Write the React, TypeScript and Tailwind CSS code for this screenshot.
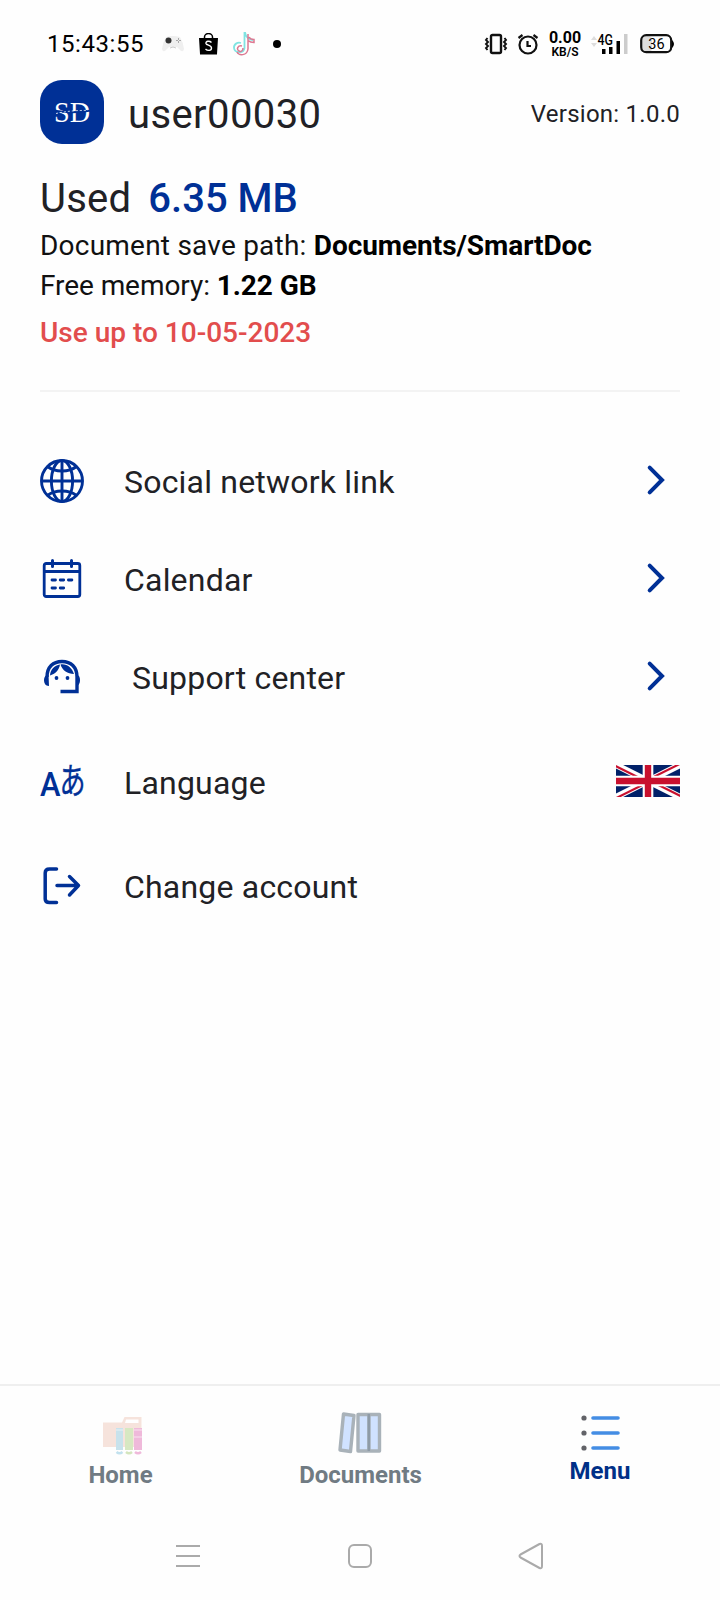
import type { ReactNode } from "react";

const GlobeIcon = () => (
  <svg className="mb-px" width="44" height="44" viewBox="0 0 44 44" fill="none" stroke="#003096" strokeWidth="2.900">
    <circle cx="22" cy="22" r="20.500" />
    <ellipse cx="22" cy="22" rx="10.600" ry="20.500" />
    <path d="M22 1v42M1 22h42" />
    <path d="M7.500 7.500c7.500 6 21.500 6 29 0M7.500 36.500c7.500-6 21.500-6 29 0" />
  </svg>
);

const CalendarIcon = () => (
  <svg width="44" height="44" viewBox="0 0 44 44" fill="none" stroke="#003096" strokeWidth="2.800">
    <rect x="4.200" y="6.500" width="35.600" height="33" rx="2" />
    <path d="M4 14.500h36" strokeWidth="3" />
    <path d="M12.500 3.500v6M31.500 3.500v6" strokeWidth="3" strokeLinecap="round" />
    <path d="M12 23h3.500M20.200 23h3.500M28.400 23h3.500M12 31h3.500M20.200 31h3.500" strokeWidth="2.800" strokeLinecap="round" />
  </svg>
);

const SupportIcon = () => (
  <svg width="44" height="44" viewBox="0 0 44 44" fill="none">
    <path d="M7 22C7 12 13 6.500 22 6.500S37 12 37 22v14.500H20.500" stroke="#003096" strokeWidth="3.400" />
    <path d="M8.500 19.500c-3 .5-4.500 2.500-4.500 5.500s1.500 6 5 6zM36 19.500c3 .5 4 2.500 4 5.500s-1 5.500-4 6z" fill="#003096" />
    <path d="M20 9.500c-5.500.8-9.500 5-10 11 5-1.500 9-5 10-11zM20.500 9.500c2 6 7 9.500 13.500 9.500C32 13 27 8.500 20.500 9.500z" fill="#003096" />
    <circle cx="16.500" cy="23" r="1.900" fill="#003096" />
    <circle cx="27.500" cy="23" r="1.900" fill="#003096" />
  </svg>
);

const LanguageIcon = () => (
  <svg className="overflow-visible" width="44" height="48" viewBox="0 0 44 48" fill="#003096">
    <text x="0" y="38" fontSize="34" fontWeight="500" textLength="20.500" lengthAdjust="spacingAndGlyphs" className="font-['Roboto',sans-serif]">A</text>
    <text x="19.500" y="36" fontSize="36" fontWeight="400" stroke="#003096" strokeWidth=".4" textLength="26" lengthAdjust="spacingAndGlyphs" className="font-['Noto_Sans_CJK_JP',sans-serif]">あ</text>
  </svg>
);

const LogoutIcon = () => (
  <svg width="44" height="44" viewBox="0 0 44 44" fill="none" stroke="#003096" strokeWidth="3.500" strokeLinecap="round" strokeLinejoin="round">
    <path d="M16.500 5H9.500Q5.200 5 5.200 9v26q0 3.500 4.300 3.500h7" />
    <path d="M17 21.500h21.500M29.500 12.500l9 9-9 9.500" />
  </svg>
);

const Chevron = () => (
  <svg className="mb-0.5" width="48" height="44" viewBox="0 0 48 44" fill="none" stroke="#003096" strokeWidth="4" strokeLinecap="round">
    <path d="M17.700 9.700L30 22 17.700 34.300" />
  </svg>
);

const Flag = () => (
  <svg className="mb-0.5" width="64" height="32" viewBox="0 0 60 30">
    <clipPath id="saltire">
      <path d="M30 15h30v15zv15H0zH0V0zV0h30z" />
    </clipPath>
    <path d="M0 0h60v30H0z" fill="#012169" />
    <path d="M0 0l60 30M60 0L0 30" stroke="#fff" strokeWidth="6" />
    <path d="M0 0l60 30M60 0L0 30" clipPath="url(#saltire)" stroke="#c8102e" strokeWidth="4" />
    <path d="M30 0v30M0 15h60" stroke="#fff" strokeWidth="10" />
    <path d="M30 0v30M0 15h60" stroke="#c8102e" strokeWidth="6" />
  </svg>
);

const menuItems: { label: string; icon: ReactNode; action?: ReactNode; height: string; indent: string }[] = [
  { label: "Social network link", icon: <GlobeIcon />, action: <Chevron />, height: "h-[98px]", indent: "pl-10" },
  { label: "Calendar", icon: <CalendarIcon />, action: <Chevron />, height: "h-[98px]", indent: "pl-10" },
  { label: "Support center", icon: <SupportIcon />, action: <Chevron />, height: "h-[98px]", indent: "pl-12" },
  { label: "Language", icon: <LanguageIcon />, action: <Flag />, height: "h-[112px]", indent: "pl-10" },
  { label: "Change account", icon: <LogoutIcon />, height: "h-[96px]", indent: "pl-10" },
];

const HomeIcon = () => (
  <svg className="ml-1.5" width="40" height="40" viewBox="0 0 40 40" fill="none">
    <path d="M0 6.500h19l2.500-5.500h17V31H0z" fill="#f6e3dc" />
    <path d="M23 3.500h12.500v3.500H22z" fill="#fff" />
    <path d="M13 12h7v22h-7z" fill="#c8e2ec" />
    <path d="M22 12h8v22h-8z" fill="#d7e8c2" />
    <path d="M31 12h8v22h-8z" fill="#efb9da" />
    <path d="M13 14h7M31 14h8M31 21h8" stroke="#fff" strokeOpacity=".4" strokeWidth="1.500" />
    <path d="M13.500 36q3 2.500 6 0" stroke="#c2e1ee" strokeWidth="2.500" />
    <path d="M23 36q3 2.500 6 0" stroke="#d3e5bd" strokeWidth="2.500" />
    <path d="M32 36q3 2.500 6 0" stroke="#efb9da" strokeWidth="2.500" />
  </svg>
);

const DocumentsIcon = () => (
  <svg width="44" height="42" viewBox="0 0 44 42" fill="#d0e2ff" stroke="#a9b2b9" strokeWidth="3.400" strokeLinejoin="round">
    <path d="M5.500 2L16 3.500 12.500 39.500 2 38z" />
    <path d="M20 2.500h11V39H20zM31 2.500h10.500V39H31z" />
    <path d="M30.800 2v37" stroke="#8e9ba7" strokeWidth="2.500" />
  </svg>
);

const ListIcon = () => (
  <svg className="ml-0.5" width="40" height="38" viewBox="0 0 40 38">
    <g fill="#626368">
      <circle cx="3" cy="4" r="2.600" />
      <circle cx="3" cy="19" r="2.600" />
      <circle cx="3" cy="34" r="2.600" />
    </g>
    <path d="M12 4h25M12 19h25M12 34h25" stroke="#448de4" strokeWidth="3.600" strokeLinecap="round" />
  </svg>
);

function StatusBar() {
  return (
    <header className="flex h-20 items-center pt-2 pl-[47px] text-black">
      <span className="w-[115px] text-[24px] leading-6 tracking-[0.550px]">15:43:55</span>
      <svg width="22" height="20" viewBox="0 0 22 20">
        <path d="M4 3Q11 1 18 3q3 5 4 12-1 4-4 1l-3-3H7l-3 3q-3 3-4-1Q1 8 4 3z" fill="#efefef" />
        <circle cx="6.500" cy="6.500" r="3" fill="#333" />
        <path d="M14 6.500h5M16.500 4v5" stroke="#aaa" strokeDasharray="2 1" />
        <path d="M8 14q3-2 6 0" stroke="#ccc" fill="none" />
      </svg>
      <svg className="ml-3.5" width="22" height="22" viewBox="0 0 22 22">
        <path d="M1 5h19l-1 16.500H2z" fill="#000" />
        <path d="M6.500 6V4a4 3.500 0 0 1 8 0V6" fill="none" stroke="#000" strokeWidth="1.500" />
        <path d="M13.500 9.500c-2-2-6-1.500-5.500 1 .5 2 5.500 1.500 5.500 4.500 0 3-4 3-6 1" fill="none" stroke="#fff" strokeWidth="1.400" />
      </svg>
      <svg className="mb-0.5 ml-3" width="24" height="25" viewBox="0 0 24 25" fill="none" strokeWidth="1.800">
        <path d="M12.500 1v16c-1 6-10 5-10.500 0-.3-4 3.500-6 7-5M13 1c.5 5 4 8 8 8" stroke="#80e4e2" />
        <path d="M16 3v15c-1 7-9 7-11 3M17 6c1 2 3 2.500 5 2.500v3c-2.500 0-4.500-.7-6-2M10 15c-4-1-6 3-3 5 2 1 4 0 4-3" stroke="#dc7891" strokeWidth="1.500" />
      </svg>
      <span className="ml-[17px] size-2 rounded-full bg-black" />

      <div className="ml-auto flex items-center pr-[45px]">
        <svg width="24" height="22" viewBox="0 0 24 22" fill="none" stroke="#111" strokeWidth="2.400">
          <rect x="7" y="2" width="10" height="18" rx="1.500" />
          <path d="M3.500 5L2 7l2 2-2 2 2 2-2 2 1.500 2M20.500 5L22 7l-2 2 2 2-2 2 2 2-1.500 2" strokeWidth="1.900" />
        </svg>
        <svg className="ml-[9px]" width="22" height="22" viewBox="0 0 22 22" fill="none" stroke="#111" strokeWidth="2.200">
          <circle cx="11" cy="12" r="8.500" />
          <path d="M10.500 8v5H14M1.500 5l4-3M20.500 5l-4-3" />
        </svg>
        <div className="ml-2.5 flex w-[32px] flex-col items-center whitespace-nowrap">
          <span className="text-[16px] leading-[14px] font-bold">0.00</span>
          <span className="pt-px text-[12px] leading-[12px] font-semibold">KB/S</span>
        </div>
        <svg className="ml-[9px]" width="38" height="24" viewBox="0 0 38 24">
          <path d="M1 8l3-4 3 4zM1 11l3 4 3-4z" fill="#ddd" />
          <text x="7.500" y="12.500" fontSize="14" fontWeight="500" textLength="15.500" lengthAdjust="spacingAndGlyphs">4G</text>
          <path d="M12 17h3.500v5H12zM19 15h3.500v7H19zM26.500 9h3.500v13h-3.500z" />
          <path d="M34 2h3.500v20H34z" fill="#ccc" />
        </svg>
        <svg className="ml-3" width="35" height="20" viewBox="0 0 35 20">
          <rect x="2" y="2" width="10" height="16" rx="4" fill="#ddd" />
          <rect x="1.200" y="1.200" width="30" height="17" rx="5" fill="none" stroke="#111" strokeWidth="2.200" />
          <path d="M32 6q4 4 0 8z" />
          <text x="16.500" y="15" fontSize="14.500" textAnchor="middle">36</text>
        </svg>
      </div>
    </header>
  );
}

export default function App() {
  return (
    <div className="flex h-[1600px] w-[720px] flex-col overflow-hidden bg-[#fefefe] font-['Roboto',sans-serif] text-[#212125]">
      <StatusBar />

      <main className="flex-1 px-10">
        {/* Account */}
        <div className="flex h-16 items-center">
          <div className="flex size-16 items-center justify-center rounded-[22px] bg-[#003096]">
            <svg className="overflow-visible" width="44" height="44" viewBox="0 0 44 44">
              <text x="4" y="32" fontSize="30" fill="#fff" textLength="36" lengthAdjust="spacingAndGlyphs" className="font-['Liberation_Serif',serif]">SD</text>
              <path d="M3 20.500Q22 24 41 20.500" stroke="#003096" strokeWidth="1.800" fill="none" />
              <path d="M6 23.500Q22 20 38 20.500" fill="none" stroke="#fff" strokeWidth=".8" strokeDasharray="2 2" />
            </svg>
          </div>
          <h1 className="pt-1.5 pl-6 text-[40px] leading-[48px] tracking-[0.400px]">user00030</h1>
          <span className="ml-auto pt-1 text-2xl tracking-[0.250px]">Version: 1.0.0</span>
        </div>

        {/* Storage */}
        <div className="flex items-center gap-[17px] pt-[31px] text-[40px] leading-[48px]">
          <span className="tracking-[0.250px]">Used</span>
          <span className="font-medium text-[#003096]">6.35 MB</span>
        </div>
        <p className="pt-[3px] text-[28px] leading-10 tracking-[0.220px] whitespace-nowrap text-[#111]">
          Document save path: <b className="tracking-[-0.050px] text-black">Documents/SmartDoc</b>
        </p>
        <p className="text-[28px] leading-10 tracking-[-0.070px] text-[#111]">
          Free memory: <b className="text-black">1.22 GB</b>
        </p>
        <p className="pt-[7px] text-[28px] leading-10 font-medium text-[#e24d4d]">Use up to 10-05-2023</p>

        <hr className="mt-[37px] border-t-2 border-[#f3f3f3]" />

        {/* Options */}
        <nav className="pt-10">
          {menuItems.map((item) => (
            <div key={item.label} className={`flex items-center ${item.height}`}>
              {item.icon}
              <span className={`pt-0.5 text-[32px] leading-10 tracking-[0.200px] ${item.indent}`}>{item.label}</span>
              {item.action && <span className="ml-auto">{item.action}</span>}
            </div>
          ))}
        </nav>
      </main>

      {/* Tabs */}
      <footer className="grid h-[136px] grid-cols-3 border-t-2 border-[#efefef] text-2xl font-bold text-[#707b83]">
        <div className="flex flex-col items-center pt-[30px]">
          <HomeIcon />
          <span className="mt-[3px] ml-px">Home</span>
        </div>
        <div className="flex flex-col items-center pt-[26px]">
          <DocumentsIcon />
          <span className="mt-[5px] ml-px">Documents</span>
        </div>
        <div className="flex flex-col items-center pt-7 text-[#003087]">
          <ListIcon />
          <span className="mt-[3px]">Menu</span>
        </div>
      </footer>

      {/* System navigation */}
      <div className="flex h-20 items-center justify-between pr-[176px] pb-2 pl-[176px]">
        <svg width="24" height="24" viewBox="0 0 24 24" stroke="#aaa" strokeWidth="2">
          <path d="M0 2h24M0 12h24M0 22h24" />
        </svg>
        <svg className="ml-px" width="26" height="26" viewBox="0 0 26 26" fill="none" stroke="#aaa" strokeWidth="2">
          <rect x="2" y="2" width="22" height="22" rx="5" />
        </svg>
        <svg width="26" height="28" viewBox="0 0 26 28" fill="none" stroke="#aaa" strokeWidth="2" strokeLinejoin="round">
          <path d="M2.500 12.500L21.500 2q2.500-1 2.500 2v20q0 3-2.500 2L2.500 15.500q-2-1.500 0-3z" />
        </svg>
      </div>
    </div>
  );
}
